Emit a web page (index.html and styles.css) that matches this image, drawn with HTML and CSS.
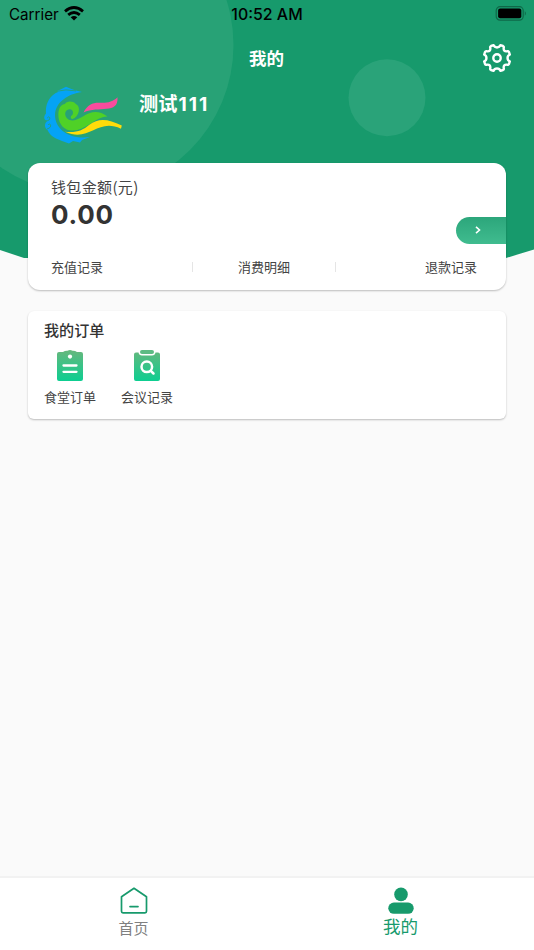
FILE: index.html
```html
<!DOCTYPE html>
<html lang="zh-CN">
<head>
<meta charset="utf-8">
<title>我的</title>
<link rel="stylesheet" href="styles.css">
</head>
<body>
<div class="app">
  <svg class="backdrop" viewBox="0 0 534 259" aria-hidden="true">
    <defs><clipPath id="shape"><path d="M0 0H534V249.5L506 258Q267 264 28 258H24L0 250Z"/></clipPath></defs>
    <g clip-path="url(#shape)">
      <rect width="534" height="259" fill="#179a6c"/>
      <circle cx="85" cy="45" r="148.5" fill="#28a276"/>
      <circle cx="387" cy="97.7" r="38.5" fill="#2aa379"/>
    </g>
  </svg>
  <header class="status">
    <div class="carrier"><span>Carrier</span>
      <svg width="20" height="15" viewBox="0 0 20 15"><g fill="none" stroke="#000" stroke-width="2.9"><path d="M1 5.3Q10-2.1 19 5.3"/><path d="M4.2 8.9Q10 4.2 15.8 8.9"/></g><path d="M6.7 11.2Q10 8.6 13.3 11.2L10 14.6Z"/></svg>
    </div>
    <time>10:52 AM</time>
    <svg class="battery" width="32" height="15" viewBox="0 0 32 15"><rect x="1.2" y=".7" width="27" height="13.4" rx="3.8" fill="none" stroke="#0f6848" stroke-width="1.2"/><rect x="3.1" y="2.6" width="23.2" height="9.6" rx="2"/><path d="M29.8 5Q32 7.3 29.8 9.7Z" fill="#0f6848"/></svg>
  </header>
  <nav class="titlebar">
    <h1>我的</h1>
    <svg class="gear" width="30" height="30" viewBox="-15 -15 30 30" fill="none" stroke="#fff" stroke-width="2.4" stroke-linejoin="round"><path d="M-6-12L-3.4-12.8C-2.3-9.8 2.3-9.8 3.4-12.8L6-12Q7-11.5 6.8-10.5C6.2-7.5 7.5-6.2 10.5-6.8Q11.5-7 12-6L12.8-3.4C9.8-2.3 9.8 2.3 12.8 3.4L12 6Q11.5 7 10.5 6.8C7.5 6.2 6.2 7.5 6.8 10.5Q7 11.5 6 12L3.4 12.8C2.3 9.8-2.3 9.8-3.4 12.8L-6 12Q-7 11.5-6.8 10.5C-6.2 7.5-7.5 6.2-10.5 6.8Q-11.5 7-12 6L-12.8 3.4C-9.8 2.3-9.8-2.3-12.8-3.4L-12-6Q-11.5-7-10.5-6.8C-7.5-6.2-6.2-7.5-6.8-10.5Q-7-11.5-6-12Z"/><circle r="3.7"/></svg>
  </nav>
  <section class="profile">
    <svg width="80" height="58" viewBox="0 0 80 58">
      <path fill="#05a3f5" d="M13 5Q18 3 22 .8Q27 3 31 4.2L38 6C24 8 11.5 16 11 29C11 43 25 54 46 51L38 54L36 56.5L29 55L25 57.6L18 55L12 52.5C7 50 5 47 3.5 44C-.5 41 1 37 3 35C-1.5 33 .5 29 2 27.5C1 18 6 9 14 6Z"/>
      <path fill="none" stroke="#28a276" stroke-width=".9" d="M12 5.4Q22 2.6 32 4.9M1.5 35Q6.8 34.5 5.6 31.5Q4.5 30 3.2 32M3 43Q7.8 41.5 6.3 38.5Q5 37 4 39"/>
      <path fill="#4fd127" d="M14.5 31C13.5 23 17 18 21 18C22 15 29 14.5 31.8 18C37.5 20.5 35 31 28.5 33Q26 32.5 27 30C30 29 29.8 23 25.5 23.3C18.5 24 20.5 35 29 34.5C38 34 48 18.5 63.5 30.5C50 31 43 44.5 28 44.5C20 44.5 15 38 14.5 31Z"/>
      <path fill="#f84b9d" d="M39.5 26.5C44 18 49 16.5 56 16.8C63 17.2 69 16 73.5 11.3C74.5 29 55 19.5 39.5 26.5Z"/>
      <path fill="#ffdc0a" d="M21 45.8C33 47 39 44 45 39C55 31.5 64 33 77.8 39.5L77 42.8C53 31.5 46 57 21 45.8Z"/>
    </svg>
    <h2>测试<span>111</span></h2>
  </section>
  <main>
    <section class="card wallet">
      <p class="label">钱包金额(元)</p>
      <div class="balance"><strong>0.00</strong><a class="more" aria-label="查看"><svg width="6" height="8" viewBox="0 0 6 8"><path d="M1 .8L4.5 4L1 7.2" fill="none" stroke="#fff" stroke-width="1.6"/></svg></a></div>
      <div class="links"><span>充值记录</span><i></i><span>消费明细</span><i></i><span>退款记录</span></div>
    </section>
    <section class="card orders">
      <h3>我的订单</h3>
      <div class="items">
        <div class="item"><svg width="26" height="31" viewBox="0 0 26 31"><defs><linearGradient id="fill" x1="0" y1="0" x2="0" y2="31" gradientUnits="userSpaceOnUse"><stop stop-color="#67b77d"/><stop offset="1" stop-color="#0dce91"/></linearGradient></defs><path fill="url(#fill)" d="M2 2H6Q8 .6 10.5 .8Q13-.6 15.5 .8Q18 .6 20 2H24Q26 2 26 4V29Q26 31 24 31H2Q0 31 0 29V4Q0 2 2 2Z"/><circle cx="13" cy="6.6" r="2.1" fill="#fff"/><path d="M6.5 15.5H19.5M6.5 21.8H19.5" stroke="#fff" stroke-width="2.3" stroke-linecap="round"/></svg><span>食堂订单</span></div>
        <div class="item"><svg width="26" height="31" viewBox="0 0 26 31"><path fill="url(#fill)" d="M2 2.5H4.5Q5 5.5 8 5.5H18Q21 5.5 21.5 2.5H24Q26 2.5 26 4.5V29Q26 31 24 31H2Q0 31 0 29V4.5Q0 2.5 2 2.5Z"/><rect x="6" y="0" width="14" height="4" rx="2" fill="#5dbb83"/><g fill="none" stroke="#fff" stroke-width="2.5" stroke-linecap="round"><circle cx="12.8" cy="16.8" r="5.3"/><path d="M16.8 20.8L19.5 23.5"/></g></svg><span>会议记录</span></div>
      </div>
    </section>
  </main>
  <footer>
    <a class="tab"><svg width="28" height="27" viewBox="0 0 28 27" fill="none" stroke="#179a6c" stroke-width="1.7" stroke-linejoin="round" stroke-linecap="round"><path d="M1.5 9.8L14 1.3L26.5 9.8V24.3Q26.5 25.8 25 25.8H3Q1.5 25.8 1.5 24.3Z"/><path d="M10 19.6H18"/></svg><span>首页</span></a>
    <a class="tab active"><svg width="26" height="27" viewBox="0 0 26 27" fill="#179a6c"><circle cx="13" cy="7.4" r="6.8"/><rect x=".3" y="15.6" width="25.4" height="11.2" rx="5.6"/></svg><span>我的</span></a>
  </footer>
</div>
</body>
</html>
```
FILE: styles.css
```css
* { box-sizing: border-box; }
body, h1, h2, h3, p { margin: 0; }
body { background: #fafafa; color: #333; font-family: "Noto Sans", "Noto Sans CJK SC", sans-serif; }
svg { display: block; flex: none; }
.app { position: relative; isolation: isolate; height: 950px; display: flex; flex-direction: column; }
.backdrop { position: absolute; top: 0; left: 0; width: 534px; height: 259px; z-index: -1; }
.status { height: 28px; display: grid; grid-template-columns: 1fr auto 1fr; align-items: center; padding: 0 7px 0 9px; color: #000; font: 15.2px/28px Inter, sans-serif; }
.status span, .status time { padding-top: 1px; }
.carrier { display: flex; align-items: center; gap: 5px; }
.carrier svg { margin-top: -3px; }
.status time { font-weight: 500; font-size: 15.9px; padding-right: 2px; }
.battery { justify-self: end; margin-top: -2px; }
.titlebar { height: 58px; display: grid; grid-template-columns: 1fr auto 1fr; align-items: center; padding: 2px 22px 0; color: #fff; }
h1 { grid-column: 2; font: 700 17.5px/26px "Noto Sans CJK SC", sans-serif; padding-right: 1px; }
.gear { justify-self: end; }
.profile { height: 77px; padding-left: 44px; display: flex; align-items: flex-start; gap: 15px; color: #fff; }
h2 { font: 700 19.2px/28px Inter, "Noto Sans CJK SC", sans-serif; margin-top: 4px; }
h2 span { letter-spacing: 2px; margin-left: 1px; }
main { flex: 1; padding: 0 28px; }
.card { background: #fff; box-shadow: 0 1px 2px rgba(0, 0, 0, .25); }
.wallet { height: 127px; border-radius: 12px; padding: 12px 0 0 23px; }
.label { color: #444; font: 15px/23px "Noto Sans CJK SC", sans-serif; letter-spacing: .35px; }
.balance { height: 47px; display: flex; justify-content: space-between; }
.balance strong { font: 700 26px/34px Inter, sans-serif; letter-spacing: .8px; }
.more { width: 50px; height: 27px; margin-top: 19px; padding: 9px 0 0 19px; border-radius: 14px 0 0 14px; background: linear-gradient(#2ca67b, #40bc8f); }
.links { display: grid; grid-template-columns: 141px 1px 142px 1px 1fr; align-items: center; padding-right: 29px; color: #444; font: 13px/20px "Noto Sans CJK SC", sans-serif; margin-top: 12px; }
.links span:nth-of-type(2) { text-align: center; }
.links span:last-child { text-align: right; }
.links i { height: 10px; background: #e5e5e5; }
.orders { height: 108px; margin-top: 21px; border-radius: 6px; padding: 7px 16px; }
h3 { font: 500 15.1px/22px "Noto Sans CJK SC", sans-serif; }
.items { display: flex; gap: 25px; margin-top: 10px; }
.item { display: flex; flex-direction: column; align-items: center; color: #444; font: 13px/20px "Noto Sans CJK SC", sans-serif; gap: 6px; }
footer { height: 74px; background: #fff; border-top: 2px solid #f2f2f2; display: flex; }
.tab { flex: 1; display: flex; flex-direction: column; align-items: center; padding-top: 9px; color: #808080; font: 15px/22px "Noto Sans CJK SC", sans-serif; }
.tab span { margin-top: 3px; }
.active { color: #179a6c; font-size: 17.5px; }
.active span { margin-top: 1px; }
```
